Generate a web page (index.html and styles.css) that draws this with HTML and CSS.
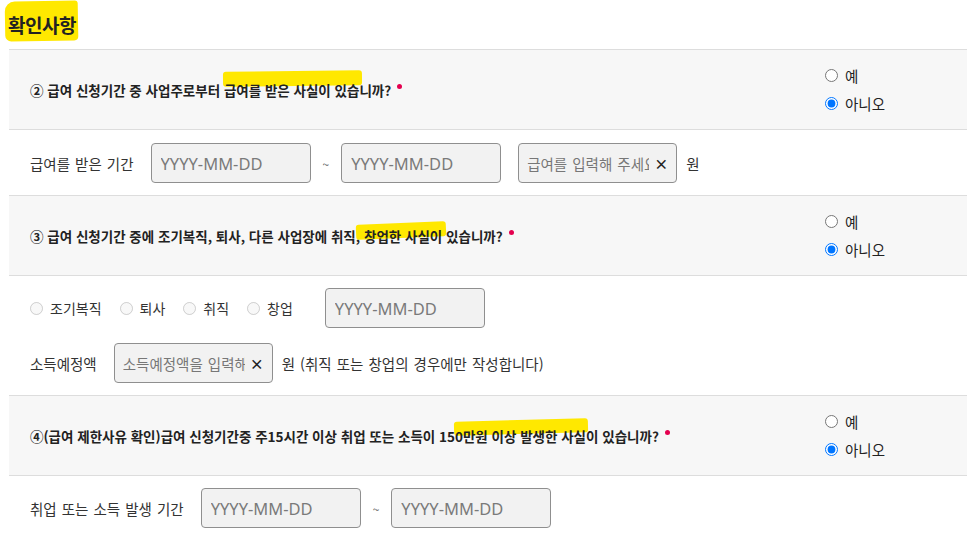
FILE: index.html
```html
<!DOCTYPE html>
<html lang="ko">
<head>
<meta charset="utf-8">
<link rel="stylesheet" href="styles.css">
</head>
<body>
<div class="page">
  <h2 class="title"><span class="mark">확인사항</span></h2>
  <div class="form">
    <div class="q">
      <p class="q-text">② 급여 신청기간 중 사업주로부터 <span class="hl hl-a">급여를 받은 사실이 있습</span>니까?<span class="req"></span></p>
      <div class="opts">
        <label class="opt"><input type="radio" name="q2"><span>예</span></label>
        <label class="opt"><input type="radio" name="q2" checked><span>아니오</span></label>
      </div>
    </div>
    <div class="row">
      <span class="lbl">급여를 받은 기간</span>
      <input class="inp" type="text" placeholder="YYYY-MM-DD">
      <span class="tilde">~</span>
      <input class="inp" type="text" placeholder="YYYY-MM-DD">
      <div class="inp-x gap-l"><input type="text" placeholder="급여를 입력해 주세요"><span class="x">×</span></div>
      <span class="unit">원</span>
    </div>
    <div class="q">
      <p class="q-text">③ 급여 신청기간 중에 조기복직, 퇴사, 다른 사업장에 취직<span class="hl hl-b">, 창업한 사실이</span> 있습니까?<span class="req"></span></p>
      <div class="opts">
        <label class="opt"><input type="radio" name="q3"><span>예</span></label>
        <label class="opt"><input type="radio" name="q3" checked><span>아니오</span></label>
      </div>
    </div>
    <div class="row row-stack">
      <div class="line">
        <label class="sub-opt"><input type="radio" name="kind" disabled><span>조기복직</span></label>
        <label class="sub-opt"><input type="radio" name="kind" disabled><span>퇴사</span></label>
        <label class="sub-opt"><input type="radio" name="kind" disabled><span>취직</span></label>
        <label class="sub-opt"><input type="radio" name="kind" disabled><span>창업</span></label>
        <input class="inp date-after" type="text" placeholder="YYYY-MM-DD">
      </div>
      <div class="line">
        <span class="lbl">소득예정액</span>
        <div class="inp-x"><input type="text" placeholder="소득예정액을 입력해 주세요"><span class="x">×</span></div>
        <span class="unit">원 (취직 또는 창업의 경우에만 작성합니다)</span>
      </div>
    </div>
    <div class="q">
      <p class="q-text">④(급여 제한사유 확인)급여 신청기간중 주15시간 이상 취업 또는 소득이 15<span class="hl hl-c">0만원 이상 발생한 사실</span>이 있습니까?<span class="req"></span></p>
      <div class="opts">
        <label class="opt"><input type="radio" name="q4"><span>예</span></label>
        <label class="opt"><input type="radio" name="q4" checked><span>아니오</span></label>
      </div>
    </div>
    <div class="row row-last">
      <span class="lbl">취업 또는 소득 발생 기간</span>
      <input class="inp" type="text" placeholder="YYYY-MM-DD">
      <span class="tilde">~</span>
      <input class="inp" type="text" placeholder="YYYY-MM-DD">
    </div>
  </div>
</div>
</body>
</html>
```

FILE: styles.css
```css
* { box-sizing: border-box; }
body {
  margin: 0;
  font-family: "Noto Sans CJK KR", "Noto Sans", sans-serif;
  color: #222;
  background: #fff;
}
.page { padding-left: 9px; }
.title {
  margin: 0 0 0 -1px;
  height: 49px;
  display: flex;
  align-items: center;
  font-size: 19px;
  font-weight: 700;
  letter-spacing: -0.5px;
}
.mark { position: relative; z-index: 0; }
.mark::before {
  content: "";
  position: absolute;
  left: -3px;
  right: -2px;
  top: -10px;
  bottom: -3px;
  background: #ffe800;
  z-index: -1;
  border-radius: 10px 3px 4px 6px;
  transform: rotate(-1deg);
}
.form { border-top: 1px solid #dddddd; }
.q {
  display: flex;
  align-items: center;
  height: 80px;
  background: #f7f7f7;
  border-bottom: 1px solid #dddddd;
  padding-left: 21px;
}
.q-text {
  flex: 1;
  margin: 0;
  font-size: 13.5px;
  font-weight: 700;
  color: #222;
  position: relative;
  z-index: 0;
}
.hl { position: relative; }
.hl::before {
  content: "";
  position: absolute;
  z-index: -1;
  background: #ffe800;
  border-radius: 3px;
}
.hl-a::before { left: -1px; right: -2px; top: -9px; height: 15px; transform: rotate(-0.6deg); }
.hl-b::before { left: 0; right: -4px; top: -3px; height: 15px; transform: rotate(-2.5deg); }
.hl-c::before { left: -1px; right: -2px; top: -6px; height: 14px; transform: rotate(-1.5deg); }
.req {
  display: inline-block;
  width: 5px;
  height: 5px;
  border-radius: 50%;
  background: #e4004f;
  margin-left: 6px;
  vertical-align: 7px;
}
.opts {
  width: 142px;
  display: flex;
  flex-direction: column;
  gap: 8px;
}
.opt {
  display: flex;
  align-items: center;
  height: 20px;
  font-size: 14.5px;
  color: #222;
}
.opt input, .sub-opt input {
  margin: 0 7px 0 0;
  width: 13px;
  height: 13px;
}
.row {
  display: flex;
  align-items: center;
  padding: 13px 0 12px 21px;
  border-bottom: 1px solid #dddddd;
  word-spacing: 1px;
}
.row-last { padding-top: 12px; }
.row-stack {
  flex-direction: column;
  align-items: flex-start;
  gap: 15px;
  padding-top: 12px;
}
.line { display: flex; align-items: center; }
.lbl {
  font-size: 14.5px;
  color: #333;
  margin-right: 17px;
}
.inp {
  width: 160px;
  height: 40px;
  border: 1px solid #8f8f8f;
  border-radius: 4px;
  background: #f2f2f2;
  padding: 0 9px;
  font-family: "Noto Sans", sans-serif;
  font-size: 16.5px;
  color: #333;
  outline: none;
  word-spacing: 0;
}
.inp::placeholder { color: #7a7a7a; }
.tilde {
  font-size: 12px;
  color: #666;
  margin: 0 12px;
}
.inp-x {
  display: flex;
  align-items: center;
  width: 159px;
  height: 40px;
  border: 1px solid #8f8f8f;
  border-radius: 4px;
  background: #f2f2f2;
  padding: 0 8px 0 8px;
}
.inp-x input {
  flex: 1;
  min-width: 0;
  border: 0;
  background: transparent;
  font-family: "Noto Sans CJK KR", sans-serif;
  font-size: 14.5px;
  word-spacing: 1px;
  padding: 0;
  outline: none;
}
.inp-x input::placeholder { color: #777; }
.x {
  font-size: 14px;
  font-weight: 700;
  color: #222;
  margin-left: 5px;
  line-height: 1;
}
.gap-l { margin-left: 17px; }
.unit {
  font-size: 14.5px;
  color: #333;
  margin-left: 9px;
}
.sub-opt {
  display: flex;
  align-items: center;
  font-size: 14px;
  color: #333;
  margin-right: 16px;
}
.sub-opt span { padding-right: 2px; }
.date-after { margin-left: 14px; }
```
